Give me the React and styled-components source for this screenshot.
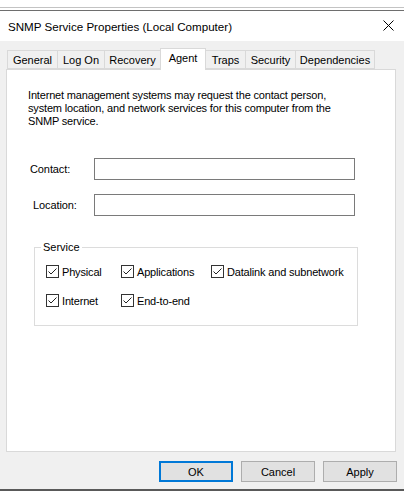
import React from "react";
import styled, { createGlobalStyle } from "styled-components";

const Global = createGlobalStyle`
  html, body { margin: 0; padding: 0; background: #fff; }
  body { font-family: "Liberation Sans", Arial, sans-serif; font-size: 11px; color: #000; }
  * { box-sizing: border-box; }
`;

const Screen = styled.div`
  width: 404px;
  height: 491px;
  display: flex;
  flex-direction: column;
  overflow: hidden;
`;

const Backdrop = styled.div`
  height: 11px;
  flex: none;
  background: linear-gradient(
    to bottom,
    #ffffff 0 7px,
    #c3c3c3 7px 8px,
    #ffffff 8px 10px,
    #6e6e6e 10px 11px
  );
`;

const TitleBar = styled.div`
  height: 30px;
  flex: none;
  background: #fff;
  display: flex;
  align-items: center;
  justify-content: space-between;
  padding: 0 10px 0 8px;
`;

const Title = styled.span`
  font-family: "Liberation Sans", Arial, sans-serif;
  font-size: 11.6px;
  color: #000;
`;

const CloseIcon = styled.svg`
  width: 11px;
  height: 11px;
  margin-top: -1px;
`;

const Body = styled.div`
  flex: 1;
  background: #f0f0f0;
  padding: 0 8px 0 6px;
  display: flex;
  flex-direction: column;
  border-bottom: 2px solid #595959;
`;

const TabStrip = styled.div`
  height: 28px;
  flex: none;
  display: flex;
  align-items: flex-end;
  padding-left: 1px;
  position: relative;
  z-index: 1;
`;

const Tab = styled.div`
  width: ${(p) => p.$w}px;
  height: ${(p) => (p.$active ? 22 : 19)}px;
  margin-left: ${(p) => (p.$first ? 0 : -1)}px;
  margin-bottom: ${(p) => (p.$active ? -1 : 0)}px;
  background: ${(p) => (p.$active ? "#fff" : "#f0f0f0")};
  border: 1px solid #d9d9d9;
  border-bottom: ${(p) => (p.$active ? "none" : "1px solid #d9d9d9")};
  display: flex;
  align-items: center;
  justify-content: center;
  padding-bottom: ${(p) => (p.$active ? 4 : 0)}px;
  position: relative;
  z-index: ${(p) => (p.$active ? 2 : 0)};
  font-size: 11px;
  white-space: nowrap;
`;

const Panel = styled.div`
  height: 383px;
  flex: none;
  background: #fff;
  border: 1px solid #d9d9d9;
  display: flex;
  flex-direction: column;
  padding: 19px 0 0 0;
`;

const Description = styled.p`
  margin: 0 0 0 21px;
  font-size: 11px;
  line-height: 13px;
  letter-spacing: -0.17px;
  width: 320px;
`;

const Fields = styled.div`
  margin-top: 30px;
  display: grid;
  grid-template-columns: 87px 261px;
  row-gap: 14px;
`;

const FieldLabel = styled.label`
  display: flex;
  align-items: center;
  padding-left: ${(p) => p.$indent}px;
  font-size: 11px;
  letter-spacing: -0.1px;
`;

const TextBox = styled.div`
  height: 22px;
  border: 1px solid #7a7a7a;
  background: #fff;
`;

const GroupBox = styled.fieldset`
  margin: 25px 0 0 27px;
  width: 324px;
  border: 1px solid #dcdcdc;
  padding: 11px 0 18px 11px;
  display: grid;
  grid-template-columns: 75px 90px auto;
  row-gap: 16px;
`;

const Legend = styled.legend`
  margin-left: -5px;
  padding: 0 2px;
  font-size: 11px;
  line-height: 13px;
`;

const CheckItem = styled.label`
  display: flex;
  align-items: center;
  gap: 3px;
  height: 13px;
  font-size: 11px;
  letter-spacing: -0.17px;
  white-space: nowrap;
`;

const Box = styled.span`
  width: 13px;
  height: 13px;
  flex: none;
  border: 1px solid #333;
  background: #fff;
  display: flex;
`;

const ButtonRow = styled.div`
  margin-top: 9px;
  display: flex;
  justify-content: flex-end;
  gap: 8px;
  margin-right: -1px;
`;

const Button = styled.button`
  width: 74px;
  height: 21px;
  padding: 0;
  font-family: "Liberation Sans", Arial, sans-serif;
  font-size: 11px;
  color: #000;
  background: #e1e1e1;
  border: ${(p) => (p.$default ? "2px solid #0078d7" : "1px solid #adadad")};
`;

function Check({ label }) {
  return (
    <CheckItem>
      <Box>
        <svg width="11" height="11" viewBox="0 0 11 11">
          <polyline points="1.5,5.5 4,8 9.5,2.5" fill="none" stroke="#222" strokeWidth="1" />
        </svg>
      </Box>
      {label}
    </CheckItem>
  );
}

const tabs = [
  { label: "General", w: 51 },
  { label: "Log On", w: 48 },
  { label: "Recovery", w: 57 },
  { label: "Agent", w: 46, active: true },
  { label: "Traps", w: 41 },
  { label: "Security", w: 51 },
  { label: "Dependencies", w: 80 },
];

export default function App() {
  return (
    <Screen>
      <Global />
      <Backdrop />
      <TitleBar>
        <Title>SNMP Service Properties (Local Computer)</Title>
        <CloseIcon viewBox="0 0 11 11">
          <path d="M0.5 0.5 L10.5 10.5 M10.5 0.5 L0.5 10.5" stroke="#000" strokeWidth="1" />
        </CloseIcon>
      </TitleBar>
      <Body>
        <TabStrip>
          {tabs.map((t, i) => (
            <Tab key={t.label} $w={t.w} $active={t.active} $first={i === 0}>
              {t.label}
            </Tab>
          ))}
        </TabStrip>
        <Panel>
          <Description>
            Internet management systems may request the contact person,
            system location, and network services for this computer from the
            SNMP service.
          </Description>
          <Fields>
            <FieldLabel $indent={23}>Contact:</FieldLabel>
            <TextBox />
            <FieldLabel $indent={26}>Location:</FieldLabel>
            <TextBox />
          </Fields>
          <GroupBox>
            <Legend>Service</Legend>
            <Check label="Physical" />
            <Check label="Applications" />
            <Check label="Datalink and subnetwork" />
            <Check label="Internet" />
            <Check label="End-to-end" />
          </GroupBox>
        </Panel>
        <ButtonRow>
          <Button $default>OK</Button>
          <Button>Cancel</Button>
          <Button>Apply</Button>
        </ButtonRow>
      </Body>
    </Screen>
  );
}
